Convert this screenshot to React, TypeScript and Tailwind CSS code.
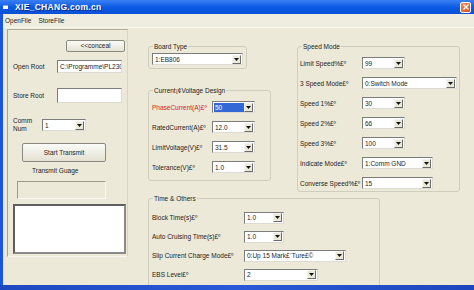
import React from "react";

function Arrow() {
  return (
    <div className="w-[9px] h-[9px] mr-[1px] shrink-0 flex items-center justify-center bg-[#ece9d8] border border-t-[#f4f4f0] border-l-[#f4f4f0] border-b-[#6b6b6b] border-r-[#6b6b6b]">
      <svg width="5" height="3" viewBox="0 0 5 3">
        <polygon points="0,0 5,0 2.5,3" fill="#111" />
      </svg>
    </div>
  );
}

function Sel({ cls, value, hl }: { cls: string; value: string; hl?: boolean }) {
  return (
    <div
      className={
        "h-[12px] shrink-0 flex items-center bg-white border border-t-[#7c7c7c] border-l-[#7c7c7c] border-b-[#dcdcd4] border-r-[#dcdcd4] " +
        cls
      }
    >
      <div className="flex-1 h-full flex items-center overflow-hidden whitespace-nowrap pl-[1px]">
        {hl ? (
          <span className="w-full h-[9px] leading-[9px] bg-[#3168d5] text-white pl-[1px]">{value}</span>
        ) : (
          <span className="pl-[1px] leading-[9px]">{value}</span>
        )}
      </div>
      <Arrow />
    </div>
  );
}

function Group({
  title,
  cls,
  children,
}: {
  title: string;
  cls: string;
  children?: React.ReactNode;
}) {
  return (
    <div className={"relative shrink-0 border border-[#cfcdbd] rounded-[3px] " + cls}>
      <span className="absolute -top-[5px] left-[4px] px-[1px] bg-[#ece9d8] leading-[9px] whitespace-nowrap">
        {title}
      </span>
      {children}
    </div>
  );
}

function Row({
  label,
  lw,
  h,
  red,
  children,
}: {
  label: string;
  lw: string;
  h: string;
  red?: boolean;
  children: React.ReactNode;
}) {
  return (
    <div className={"flex items-center " + h}>
      <span className={"shrink-0 whitespace-nowrap leading-[9px] " + lw + (red ? " text-[#d3221a]" : "")}>
        {label}
      </span>
      {children}
    </div>
  );
}

export default function App() {
  return (
    <div className="w-[474px] h-[290px] overflow-hidden flex flex-col bg-[#ece9d8] text-[6.5px] text-[#1c1c1c] font-['Liberation_Sans',Arial,sans-serif]">
      {/* Title bar */}
      <div className="h-[14px] shrink-0 flex items-center bg-gradient-to-b from-[#3a80f3] via-[#0b5ae6] to-[#0a50d6]">
        <div className="ml-[3px] w-[5px] h-[4px] bg-white border-t border-[#9ab]" />
        <span className="ml-[7px] text-white font-bold text-[8.5px] leading-[10px] tracking-[0.3px] [text-shadow:1px_1px_0_#0a2a80]">
          XIE_CHANG.com.cn
        </span>
        <div className="flex-1" />
        <div className="mr-[3px] w-[11px] h-[11px] rounded-[2px] border border-white bg-gradient-to-br from-[#ee8a62] to-[#d44a1e] flex items-center justify-center">
          <svg width="6" height="6" viewBox="0 0 6 6">
            <path d="M0.5 0.5 L5.5 5.5 M5.5 0.5 L0.5 5.5" stroke="white" strokeWidth="1.3" />
          </svg>
        </div>
      </div>

      <div className="flex-1 flex min-h-0">
        <div className="w-[3px] shrink-0 bg-[#1b55db]" />
        <div className="flex-1 flex flex-col min-w-0">
          {/* Menu */}
          <div className="h-[14px] shrink-0 flex items-center pl-[2px] gap-[7px] bg-[#efede0] border-b border-[#f8f7f0]">
            <span>OpenFile</span>
            <span>StoreFile</span>
          </div>

          {/* Body */}
          <div className="flex-1 flex items-start overflow-hidden">
            {/* Left panel */}
            <div className="ml-[4px] mt-[1px] w-[121px] h-[228px] shrink-0 flex flex-col border border-t-[#b0ad9a] border-l-[#a8a590] border-b-[#f6f5ee] border-r-[#d8d5c4]">
              <div className="mt-[10px] flex justify-end pr-[2px]">
                <div className="w-[59px] h-[12px] flex items-center justify-center bg-gradient-to-b from-[#fbfbf8] to-[#e6e3d4] border border-[#8a8a80] rounded-[2px]">
                  &lt;&lt;conceal
                </div>
              </div>
              <div className="mt-[8px] flex items-center pl-[5px]">
                <span className="w-[44px] shrink-0">Open Root</span>
                <div className="w-[65px] h-[13px] bg-white border border-t-[#7c7c7c] border-l-[#7c7c7c] border-b-[#dcdcd4] border-r-[#dcdcd4] overflow-hidden whitespace-nowrap flex items-center pl-[2px]">
                  C:\Programme\PL230
                </div>
              </div>
              <div className="mt-[15px] flex items-center pl-[5px]">
                <span className="w-[44px] shrink-0">Store Root</span>
                <div className="w-[65px] h-[15px] bg-white border border-t-[#7c7c7c] border-l-[#7c7c7c] border-b-[#dcdcd4] border-r-[#dcdcd4]" />
              </div>
              <div className="mt-[15px] h-[14px] flex items-center pl-[5px]">
                <span className="w-[29px] shrink-0 leading-[8px]">
                  Comm
                  <br />
                  Num
                </span>
                <Sel cls="w-[44px]" value="1" />
              </div>
              <div className="mt-[11px] ml-[14px] w-[84px] h-[19px] flex items-center justify-center bg-gradient-to-b from-[#fbfbf8] to-[#e4e1d2] border border-[#8a8a80] rounded-[2px]">
                Start Transmit
              </div>
              <div className="mt-[4px] ml-[24px] h-[9px] leading-[9px]">Transmit Guage</div>
              <div className="mt-[6px] ml-[9px] w-[89px] h-[18px] border border-t-[#9c9a8a] border-l-[#9c9a8a] border-b-[#faf9f4] border-r-[#faf9f4]" />
              <div className="mt-[5px] ml-[5px] w-[113px] h-[50px] bg-white border-2 border-t-[#5e5e5e] border-l-[#5e5e5e] border-b-[#8a8a8a] border-r-[#8a8a8a]" />
            </div>

            {/* Right area */}
            <div className="ml-[20px] flex flex-col shrink-0">
              <div className="flex items-start">
                <div className="w-[124px] shrink-0 flex flex-col">
                  <Group title="Board Type" cls="mt-[18px] w-[99px] h-[23px]">
                    <div className="pt-[6px] pl-[3px]">
                      <Sel cls="w-[91px]" value="1:EB806" />
                    </div>
                  </Group>
                  <Group title="Current¡¢Voltage Design" cls="mt-[21px] w-[123px] h-[91px]">
                    <div className="pt-[6px] pl-[3px] flex flex-col">
                      <Row label="PhaseCurrent(A)£º" lw="w-[60px]" h="h-[20px]" red>
                        <Sel cls="w-[43px]" value="50" hl />
                      </Row>
                      <Row label="RatedCurrent(A)£º" lw="w-[60px]" h="h-[20px]">
                        <Sel cls="w-[43px]" value="12.0" />
                      </Row>
                      <Row label="LimitVoltage(V)£º" lw="w-[60px]" h="h-[20px]">
                        <Sel cls="w-[43px]" value="31.5" />
                      </Row>
                      <Row label="Tolerance(V)£º" lw="w-[60px]" h="h-[20px]">
                        <Sel cls="w-[43px]" value="1.0" />
                      </Row>
                    </div>
                  </Group>
                </div>
                <Group title="Speed Mode" cls="ml-[25px] mt-[18px] w-[163px] h-[146px]">
                  <div className="pt-[6px] pl-[2px] flex flex-col">
                    <Row label="Limit Speed%£º" lw="w-[62px]" h="h-[20px]">
                      <Sel cls="w-[43px]" value="99" />
                    </Row>
                    <Row label="3 Speed Mode£º" lw="w-[62px]" h="h-[20px]">
                      <Sel cls="w-[95px]" value="0:Switch Mode" />
                    </Row>
                    <Row label="Speed 1%£º" lw="w-[62px]" h="h-[20px]">
                      <Sel cls="w-[43px]" value="30" />
                    </Row>
                    <Row label="Speed 2%£º" lw="w-[62px]" h="h-[20px]">
                      <Sel cls="w-[43px]" value="66" />
                    </Row>
                    <Row label="Speed 3%£º" lw="w-[62px]" h="h-[20px]">
                      <Sel cls="w-[43px]" value="100" />
                    </Row>
                    <Row label="Indicate Mode£º" lw="w-[62px]" h="h-[20px]">
                      <Sel cls="w-[71px]" value="1:Comm GND" />
                    </Row>
                    <Row label="Converse Speed%£º" lw="w-[62px]" h="h-[20px]">
                      <Sel cls="w-[71px]" value="15" />
                    </Row>
                  </div>
                </Group>
              </div>
              <Group title="Time & Others" cls="mt-[6px] w-[232px] h-[100px]">
                <div className="pt-[9px] pl-[3px] flex flex-col">
                  <Row label="Block Time(s)£º" lw="w-[92px]" h="h-[19px]">
                    <Sel cls="w-[40px]" value="1.0" />
                  </Row>
                  <Row label="Auto Cruising Time(s)£º" lw="w-[92px]" h="h-[19px]">
                    <Sel cls="w-[40px]" value="1.0" />
                  </Row>
                  <Row label="Slip Current Charge Mode£º" lw="w-[92px]" h="h-[19px]">
                    <Sel cls="w-[102px]" value="0:Up 15 Mark£¨Ture£©" />
                  </Row>
                  <Row label="EBS Level£º" lw="w-[92px]" h="h-[19px]">
                    <Sel cls="w-[74px]" value="2" />
                  </Row>
                </div>
              </Group>
            </div>
          </div>
        </div>
      </div>

      {/* Bottom strip */}
      <div className="h-[5px] shrink-0 bg-gradient-to-r from-[#1d48c0] via-[#2a5ad8] to-[#1c46bc]" />
    </div>
  );
}
